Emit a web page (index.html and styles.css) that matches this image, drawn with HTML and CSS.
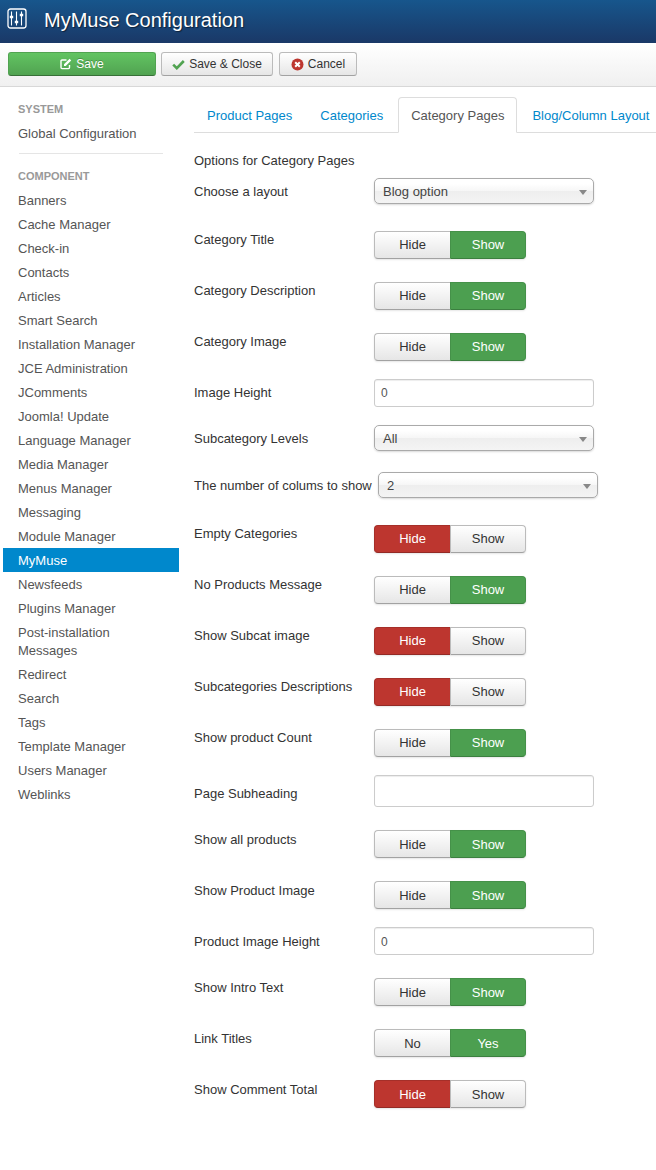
FILE: index.html
```html
<!DOCTYPE html>
<html lang="en">
<head>
<meta charset="utf-8">
<title>MyMuse Configuration</title>
<link rel="stylesheet" href="styles.css">
</head>
<body>
<header class="titlebar">
  <svg class="title-icon" width="20" height="21" viewBox="0 0 20 21" aria-hidden="true">
    <rect x="1" y="1" width="18" height="19" rx="2.5" fill="none" stroke="#fff" stroke-width="1.3"/>
    <path d="M4.5 3.5v14M9.5 3.5v14M14.5 3.5v14" stroke="#fff" stroke-width="1.1" fill="none"/>
    <path d="M2.8 9h3.4M7.8 14h3.4M12.8 7h3.4" stroke="#fff" stroke-width="2.4" fill="none"/>
  </svg>
  <h1 class="title">MyMuse Configuration</h1>
</header>
<div class="toolbar">
  <button class="btn btn-save" type="button">
    <svg width="12" height="12" viewBox="0 0 12 12" aria-hidden="true"><path d="M9.5 7v2.6a1 1 0 0 1-1 1H2a1 1 0 0 1-1-1V3a1 1 0 0 1 1-1h4.5" fill="none" stroke="#fff" stroke-width="1.4"/><path d="M4 6.2 9.6.8l1.6 1.6L5.7 8H4z" fill="#fff"/></svg>
    Save
  </button>
  <button class="btn btn-close" type="button">
    <svg width="13" height="11" viewBox="0 0 13 11" aria-hidden="true"><path d="M1.2 5.6 4.8 9.2 11.8 2" fill="none" stroke="#51a351" stroke-width="2.6"/></svg>
    Save &amp; Close
  </button>
  <button class="btn btn-cancel" type="button">
    <svg width="13" height="13" viewBox="0 0 13 13" aria-hidden="true"><circle cx="6.5" cy="6.5" r="6" fill="#bd362f"/><path d="M4.2 4.2l4.6 4.6M8.8 4.2 4.2 8.8" stroke="#fff" stroke-width="2"/></svg>
    Cancel
  </button>
</div>
<div class="layout">
  <nav class="sidebar">
    <div class="nav-head">System</div>
    <a class="nav-item">Global Configuration</a>
    <div class="nav-divider"></div>
    <div class="nav-head">Component</div>
    <a class="nav-item">Banners</a>
    <a class="nav-item">Cache Manager</a>
    <a class="nav-item">Check-in</a>
    <a class="nav-item">Contacts</a>
    <a class="nav-item">Articles</a>
    <a class="nav-item">Smart Search</a>
    <a class="nav-item">Installation Manager</a>
    <a class="nav-item">JCE Administration</a>
    <a class="nav-item">JComments</a>
    <a class="nav-item">Joomla! Update</a>
    <a class="nav-item">Language Manager</a>
    <a class="nav-item">Media Manager</a>
    <a class="nav-item">Menus Manager</a>
    <a class="nav-item">Messaging</a>
    <a class="nav-item">Module Manager</a>
    <a class="nav-item active">MyMuse</a>
    <a class="nav-item">Newsfeeds</a>
    <a class="nav-item">Plugins Manager</a>
    <a class="nav-item">Post-installation Messages</a>
    <a class="nav-item">Redirect</a>
    <a class="nav-item">Search</a>
    <a class="nav-item">Tags</a>
    <a class="nav-item">Template Manager</a>
    <a class="nav-item">Users Manager</a>
    <a class="nav-item">Weblinks</a>
  </nav>
  <main class="content">
    <ul class="tabs">
      <li class="tab">Product Pages</li>
      <li class="tab">Categories</li>
      <li class="tab active">Category Pages</li>
      <li class="tab">Blog/Column Layout</li>
    </ul>
    <p class="intro">Options for Category Pages</p>

    <div class="row row-select"><label class="label">Choose a layout</label><div class="select"><span>Blog option</span><i class="caret"></i></div></div>
    <div class="row row-toggle"><label class="label">Category Title</label><div class="toggle"><span class="opt">Hide</span><span class="opt on-green">Show</span></div></div>
    <div class="row row-toggle"><label class="label">Category Description</label><div class="toggle"><span class="opt">Hide</span><span class="opt on-green">Show</span></div></div>
    <div class="row row-toggle"><label class="label">Category Image</label><div class="toggle"><span class="opt">Hide</span><span class="opt on-green">Show</span></div></div>
    <div class="row"><label class="label">Image Height</label><div class="input">0</div></div>
    <div class="row row-select-tight"><label class="label">Subcategory Levels</label><div class="select"><span>All</span><i class="caret"></i></div></div>
    <div class="row row-select row-inline"><label class="label">The number of colums to show</label><div class="select"><span>2</span><i class="caret"></i></div></div>
    <div class="row row-toggle"><label class="label">Empty Categories</label><div class="toggle"><span class="opt on-red">Hide</span><span class="opt">Show</span></div></div>
    <div class="row row-toggle"><label class="label">No Products Message</label><div class="toggle"><span class="opt">Hide</span><span class="opt on-green">Show</span></div></div>
    <div class="row row-toggle"><label class="label">Show Subcat image</label><div class="toggle"><span class="opt on-red">Hide</span><span class="opt">Show</span></div></div>
    <div class="row row-toggle"><label class="label">Subcategories Descriptions</label><div class="toggle"><span class="opt on-red">Hide</span><span class="opt">Show</span></div></div>
    <div class="row row-toggle"><label class="label">Show product Count</label><div class="toggle"><span class="opt">Hide</span><span class="opt on-green">Show</span></div></div>
    <div class="row row-tall"><label class="label">Page Subheading</label><div class="input input-tall"></div></div>
    <div class="rows-late">
      <div class="row row-toggle"><label class="label">Show all products</label><div class="toggle"><span class="opt">Hide</span><span class="opt on-green">Show</span></div></div>
      <div class="row row-toggle"><label class="label">Show Product Image</label><div class="toggle"><span class="opt">Hide</span><span class="opt on-green">Show</span></div></div>
      <div class="row"><label class="label">Product Image Height</label><div class="input">0</div></div>
      <div class="row row-toggle"><label class="label">Show Intro Text</label><div class="toggle"><span class="opt">Hide</span><span class="opt on-green">Show</span></div></div>
      <div class="row row-toggle"><label class="label">Link Titles</label><div class="toggle"><span class="opt">No</span><span class="opt on-green">Yes</span></div></div>
      <div class="row row-toggle"><label class="label">Show Comment Total</label><div class="toggle"><span class="opt on-red">Hide</span><span class="opt">Show</span></div></div>
    </div>
  </main>
</div>
</body>
</html>
```
FILE: styles.css
```css
* { box-sizing: border-box; }
html, body { margin: 0; padding: 0; }
body {
  width: 656px;
  height: 1170px;
  overflow: hidden;
  background: #fff;
  color: #333;
  font-family: "Liberation Sans", Arial, sans-serif;
  font-size: 13px;
  line-height: 18px;
}
.titlebar {
  height: 43px;
  display: flex;
  align-items: flex-start;
  padding: 0 0 0 7px;
  gap: 17px;
  background: linear-gradient(#17568c, #1a3867);
}
.title-icon { flex: none; margin-top: 8px; }
.title {
  margin: 0;
  color: #fff;
  font-size: 20px;
  font-weight: 400;
  line-height: 40px;
  text-shadow: 1px 1px 1px rgba(0,0,0,.5);
}
.toolbar {
  height: 44px;
  display: flex;
  align-items: flex-start;
  gap: 5px;
  padding: 9px 8px 0;
  background: linear-gradient(#fff, #f0f0f0);
  border-bottom: 1px solid #d8d8d8;
}
.btn {
  height: 24px;
  padding: 0;
  display: inline-flex;
  align-items: center;
  justify-content: center;
  gap: 4px;
  font: 12px/18px "Liberation Sans", Arial, sans-serif;
  color: #333;
  background: linear-gradient(#fff, #e6e6e6);
  border: 1px solid #bbb;
  border-bottom-color: #a2a2a2;
  border-radius: 3px;
}
.btn-save {
  width: 148px;
  color: #fff;
  background: linear-gradient(#62c462, #51a351);
  border-color: #51a351 #51a351 #387038;
  text-shadow: 0 -1px 0 rgba(0,0,0,.25);
}
.btn-close { width: 112px; margin-right: 1px; }
.btn-cancel { width: 78px; }
.layout { display: flex; align-items: flex-start; }
.sidebar {
  width: 176px;
  margin-left: 3px;
  flex: none;
  padding-top: 13px;
}
.nav-head {
  padding: 0 15px;
  height: 18px;
  font-size: 11px;
  font-weight: 700;
  color: #999;
  text-transform: uppercase;
  text-shadow: 0 1px 0 #fff;
  margin-bottom: 4px;
}
.nav-item {
  display: block;
  padding: 3px 15px;
  color: #555;
}
.nav-item.active {
  margin: -1px 0 1px;
  padding: 4px 15px 2px;
  background: #0088cc;
  color: #fff;
}
.nav-divider {
  height: 1px;
  width: 144px;
  margin: 7px 0 13px 16px;
  background: #e5e5e5;
}
.content { flex: 1; min-width: 0; margin-left: 15px; padding-top: 10px; }
.tabs {
  list-style: none;
  margin: 0 -10px 0 0;
  padding: 0;
  display: flex;
  height: 36px;
  border-bottom: 1px solid #ddd;
}
.tab {
  flex: none;
  height: 36px;
  padding: 9px 12px;
  margin-right: 2px;
  color: #0088cc;
  white-space: nowrap;
  border: 1px solid transparent;
  border-radius: 4px 4px 0 0;
}
.tab.active {
  color: #555;
  background: #fff;
  border-color: #ddd #ddd #fff;
}
.intro { margin: 19px 0 8px; }
.row { display: flex; align-items: flex-start; height: 46px; }
.label { flex: none; width: 180px; padding-top: 5px; }
.row-toggle { height: 51px; }
.row-toggle .toggle { margin-top: 5px; }
.row-select { height: 48px; }
.row-select-tight { height: 47px; }
.row-tall { height: 50px; }
.row-tall .label { padding-top: 10px; }
.row-inline .label { width: 184px; }
.rows-late .label { padding-top: 6px; }
.rows-late .opt { line-height: 28px; }
.rows-late .input { line-height: 29px; }
.toggle {
  display: flex;
  width: 152px;
  height: 28px;
  border-radius: 4px;
  box-shadow: 0 1px 2px rgba(0,0,0,.1);
}
.opt {
  width: 76px;
  height: 28px;
  line-height: 26px;
  text-align: center;
  color: #333;
  background: linear-gradient(#fff, #e6e6e6);
  border: 1px solid #bbb;
  border-bottom-color: #a2a2a2;
}
.opt:first-child { border-radius: 4px 0 0 4px; border-right: 0; }
.opt:last-child { border-radius: 0 4px 4px 0; }
.on-green { background: #4c9f50; border-color: #459149 #459149 #3b7f3f; color: #fff; }
.on-red { background: #bd362f; border-color: #a52f29 #a52f29 #932a25; color: #fff; }
.select {
  position: relative;
  width: 220px;
  height: 26px;
  padding: 0 8px;
  line-height: 25px;
  color: #444;
  background: linear-gradient(#fff 20%, #f6f6f6 50%, #eee 52%, #f4f4f4);
  border: 1px solid #aaa;
  border-radius: 5px;
  box-shadow: 0 1px 2px rgba(0,0,0,.15);
}
.caret {
  position: absolute;
  right: 6px;
  top: 11px;
  border-style: solid;
  border-width: 5px 4px 0;
  border-color: #888 transparent transparent;
}
.input {
  width: 220px;
  height: 28px;
  padding: 0 6px;
  line-height: 27px;
  font-size: 12px;
  color: #555;
  background: #fff;
  border: 1px solid #ccc;
  border-radius: 3px;
  box-shadow: inset 0 1px 1px rgba(0,0,0,.075);
}
.input-tall { height: 32px; }
```
